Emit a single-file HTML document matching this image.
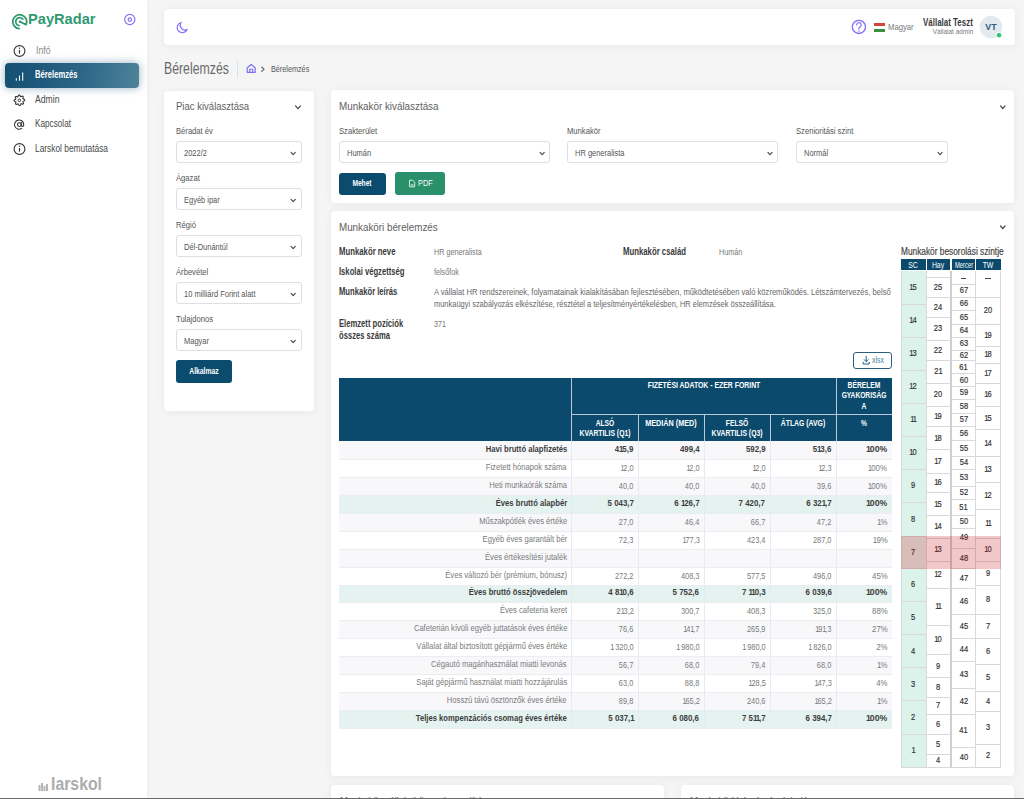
<!DOCTYPE html><html><head><meta charset="utf-8"><title>PayRadar</title><style>
*{margin:0;padding:0;box-sizing:border-box}
html,body{width:1024px;height:799px;overflow:hidden;background:#f5f5f5;font-family:"Liberation Sans",sans-serif}
.t{position:absolute;white-space:nowrap;line-height:1}
.b{position:absolute}
.card{position:absolute;background:#fff;border-radius:4px;box-shadow:0 1px 8px rgba(0,0,0,.06)}
.sel{position:absolute;background:#fff;border:1px solid #dedee6;border-radius:3px}
svg{position:absolute;overflow:visible}
</style></head><body>
<div class="b" style="left:0.00px;top:0.00px;width:147.00px;height:799.00px;background:#fff;box-shadow:1px 0 5px rgba(0,0,0,.03)"></div>
<svg style="left:8px;top:10px" width="25" height="25" viewBox="8 10 25 25"><path d="M19.09 28.67A7.0 7.0 0 1 1 26.04 24.66 L20 21.7" fill="none" stroke="#2f9a70" stroke-width="1.75" stroke-linecap="round" stroke-linejoin="round"/><path d="M19.01 25.64A4.0 4.0 0 1 1 22.76 19.13" fill="none" stroke="#2f9a70" stroke-width="1.75" stroke-linecap="round"/><circle cx="20" cy="21.7" r="1.3" fill="#2f9a70"/></svg>
<div class="t" style="left:27.80px;top:12.47px;font-size:14.8px;font-weight:700;color:#2f9a70;transform:scaleX(0.9886);transform-origin:0 0;">PayRadar</div>
<svg style="left:120px;top:10px" width="20" height="20" viewBox="120 10 20 20"><circle cx="129.8" cy="19.5" r="5.1" fill="none" stroke="#8072f5" stroke-width="1.15"/><circle cx="129.8" cy="19.5" r="1.7" fill="none" stroke="#8072f5" stroke-width="1.15"/></svg>
<div class="b" style="left:5.00px;top:62.50px;width:133.50px;height:25.50px;background:linear-gradient(100deg,#134f72 0%,#2b6586 55%,#4e8399 100%);border-radius:4px;box-shadow:0 0 8px rgba(20,80,115,.45)"></div>
<svg style="left:10px;top:40px" width="20" height="20" viewBox="10 40 20 20"><circle cx="19.5" cy="51" r="5.4" fill="none" stroke="#333" stroke-width="1.1"/><path d="M19.5 50v3.6" stroke="#333" stroke-width="1.2"/><circle cx="19.5" cy="48.3" r=".7" fill="#333"/></svg>
<svg style="left:10px;top:66px" width="20" height="20" viewBox="10 66 20 20"><path d="M16.3 80.3v-1.8M19.5 80.3v-4.3M22.7 80.3v-7.5" stroke="#fff" stroke-width="1.05" stroke-linecap="round"/></svg>
<svg style="left:10px;top:90px" width="20" height="20" viewBox="10 90 20 20"><path d="M24.69 100.30 L24.45 100.63 L24.06 100.91 L23.63 101.14 L23.27 101.34 L23.05 101.54 L23.01 101.80 L23.12 102.13 L23.30 102.55 L23.46 103.02 L23.52 103.46 L23.42 103.82 L23.14 104.04 L22.73 104.10 L22.26 104.03 L21.80 103.89 L21.40 103.77 L21.11 103.76 L20.90 103.91 L20.73 104.22 L20.57 104.65 L20.35 105.09 L20.08 105.45 L19.75 105.63 L19.40 105.59 L19.07 105.35 L18.79 104.96 L18.56 104.53 L18.36 104.17 L18.16 103.95 L17.90 103.91 L17.57 104.02 L17.15 104.20 L16.68 104.36 L16.24 104.42 L15.88 104.32 L15.66 104.04 L15.60 103.63 L15.67 103.16 L15.81 102.70 L15.93 102.30 L15.94 102.01 L15.79 101.80 L15.48 101.63 L15.05 101.47 L14.61 101.25 L14.25 100.98 L14.07 100.65 L14.11 100.30 L14.35 99.97 L14.74 99.69 L15.17 99.46 L15.53 99.26 L15.75 99.06 L15.79 98.80 L15.68 98.47 L15.50 98.05 L15.34 97.58 L15.28 97.14 L15.38 96.78 L15.66 96.56 L16.07 96.50 L16.54 96.57 L17.00 96.71 L17.40 96.83 L17.69 96.84 L17.90 96.69 L18.07 96.38 L18.23 95.95 L18.45 95.51 L18.72 95.15 L19.05 94.97 L19.40 95.01 L19.73 95.25 L20.01 95.64 L20.24 96.07 L20.44 96.43 L20.64 96.65 L20.90 96.69 L21.23 96.58 L21.65 96.40 L22.12 96.24 L22.56 96.18 L22.92 96.28 L23.14 96.56 L23.20 96.97 L23.13 97.44 L22.99 97.90 L22.87 98.30 L22.86 98.59 L23.01 98.80 L23.32 98.97 L23.75 99.13 L24.19 99.35 L24.55 99.62 L24.73 99.95Z" fill="none" stroke="#333" stroke-width="1.1"/><circle cx="19.4" cy="100.3" r="1.3" fill="none" stroke="#333" stroke-width="1"/></svg>
<svg style="left:10px;top:114px" width="20" height="20" viewBox="10 114 20 20"><circle cx="19.4" cy="124.6" r="1.9" fill="none" stroke="#333" stroke-width="1.1"/><path d="M21.3 122.6v2.6a1.2 1.2 0 0 0 2.4 0v-.6a4.6 4.6 0 1 0-2 3.8" fill="none" stroke="#333" stroke-width="1.1" stroke-linecap="round"/></svg>
<svg style="left:10px;top:139px" width="20" height="20" viewBox="10 139 20 20"><circle cx="19.5" cy="149" r="5.4" fill="none" stroke="#333" stroke-width="1.1"/><path d="M19.5 148v3.6" stroke="#333" stroke-width="1.2"/><circle cx="19.5" cy="146.3" r=".7" fill="#333"/></svg>
<div class="t" style="left:35.90px;top:46.45px;font-size:10.1px;font-weight:400;color:#888;transform:scaleX(0.8608);transform-origin:0 0;">Infó</div>
<div class="t" style="left:34.50px;top:70.25px;font-size:10.1px;font-weight:700;color:#fff;transform:scaleX(0.7588);transform-origin:0 0;">Bérelemzés</div>
<div class="t" style="left:34.50px;top:95.05px;font-size:10.1px;font-weight:400;color:#4a4a4a;transform:scaleX(0.8558);transform-origin:0 0;">Admin</div>
<div class="t" style="left:34.50px;top:119.45px;font-size:10.1px;font-weight:400;color:#4a4a4a;transform:scaleX(0.8117);transform-origin:0 0;">Kapcsolat</div>
<div class="t" style="left:34.50px;top:144.45px;font-size:10.1px;font-weight:400;color:#4a4a4a;transform:scaleX(0.8283);transform-origin:0 0;">Larskol bemutatása</div>
<svg style="left:30px;top:775px" width="25" height="20" viewBox="30 775 25 20"><path d="M38.5 791v-6h2v6zM41 791v-8h2v8zM43.5 791v-5h2v5zM46 791v-7h2v7z" fill="#b5b5b5"/></svg>
<div class="t" style="left:51.00px;top:775.32px;font-size:18.4px;font-weight:700;color:#acacac;transform:scaleX(0.8597);transform-origin:0 0;">larskol</div>
<div class="card" style="left:163.5px;top:9px;width:851px;height:35.5px"></div>
<svg style="left:172px;top:17px" width="20" height="20" viewBox="172 17 20 20"><path d="M187.2 29.6a4.9 4.9 0 0 1-6.1-7.1a5.2 5.2 0 1 0 6.1 7.1z" fill="none" stroke="#7d6ef5" stroke-width="1.2" stroke-linejoin="round"/></svg>
<svg style="left:848px;top:16px" width="22" height="22" viewBox="848 16 22 22"><circle cx="858.9" cy="26.9" r="6.6" fill="none" stroke="#7d6ef5" stroke-width="1.3"/><path d="M856.6 25a2.3 2.3 0 1 1 3.3 2.1c-.7.4-1 .8-1 1.5v.3" fill="none" stroke="#7d6ef5" stroke-width="1.2" stroke-linecap="round"/><circle cx="858.9" cy="31" r=".7" fill="#7d6ef5"/></svg>
<div class="b" style="left:874.00px;top:23.00px;width:11.00px;height:2.90px;background:#d6433a"></div>
<div class="b" style="left:874.00px;top:25.90px;width:11.00px;height:2.80px;background:#fff"></div>
<div class="b" style="left:874.00px;top:28.70px;width:11.00px;height:2.90px;background:#3a8f3e"></div>
<div class="t" style="left:888.00px;top:22.51px;font-size:9.2px;font-weight:400;color:#7a7a7a;transform:scaleX(0.8378);transform-origin:0 0;">Magyar</div>
<div class="t" style="right:51.00px;top:18.27px;font-size:10.2px;font-weight:700;color:#3a3a3a;transform:scaleX(0.7798);transform-origin:100% 0;">Vállalat Teszt</div>
<div class="t" style="right:51.00px;top:27.83px;font-size:8px;font-weight:400;color:#7a7a7a;transform:scaleX(0.8060);transform-origin:100% 0;">Vállalat admin</div>
<svg style="left:975px;top:12px" width="32" height="32" viewBox="975 12 32 32"><circle cx="991" cy="27" r="11.2" fill="#e4e9ee"/><circle cx="999" cy="35.2" r="2.8" fill="#28c76f" stroke="#fff" stroke-width="1"/></svg>
<div class="t" style="left:841.00px;width:300px;text-align:center;top:22.47px;font-size:9.6px;font-weight:700;color:#2b5f80;transform:scaleX(0.9200);transform-origin:50% 0;">VT</div>
<div class="t" style="left:163.90px;top:60.99px;font-size:15.6px;font-weight:400;color:#6a6a6a;transform:scaleX(0.7880);transform-origin:0 0;">Bérelemzés</div>
<div class="b" style="left:237.20px;top:61.25px;width:1.00px;height:16.45px;background:#dde1e6"></div>
<svg style="left:240px;top:58px" width="20" height="20" viewBox="240 58 20 20"><path d="M247.2 72.3v-4.6l4-3.2 4 3.2v4.6z" fill="none" stroke="#7d6ef5" stroke-width="1.2" stroke-linejoin="round"/><path d="M249.7 72.3v-3h3v3" fill="none" stroke="#7d6ef5" stroke-width="1.1"/></svg>
<svg style="left:255px;top:60px" width="15" height="15" viewBox="255 60 15 15"><path d="M261.8 67.2l2.2 2.1-2.2 2.1" fill="none" stroke="#555" stroke-width="1.1" stroke-linecap="round"/></svg>
<div class="t" style="left:270.60px;top:64.92px;font-size:8.6px;font-weight:400;color:#555;transform:scaleX(0.8435);transform-origin:0 0;">Bérelemzés</div>
<div class="card" style="left:163.5px;top:90.5px;width:150.5px;height:320.5px"></div>
<div class="card" style="left:330.5px;top:90px;width:683.5px;height:112.5px"></div>
<div class="card" style="left:330.5px;top:211px;width:683.5px;height:565px"></div>
<div class="card" style="left:330.5px;top:785px;width:333px;height:40px"></div>
<div class="card" style="left:681px;top:785px;width:333px;height:40px"></div>
<div class="t" style="left:176.00px;top:101.02px;font-size:11.2px;font-weight:400;color:#5e5e5e;transform:scaleX(0.8521);transform-origin:0 0;">Piac kiválasztása</div>
<svg style="left:292px;top:101px" width="12" height="12" viewBox="292 101 12 12"><path d="M295.50 105.90 L298.00 108.70 L300.50 105.90" fill="none" stroke="#444" stroke-width="1.2" stroke-linecap="round" stroke-linejoin="round"/></svg>
<div class="t" style="left:176.00px;top:126.97px;font-size:8.3px;font-weight:400;color:#555;transform:scaleX(0.9200);transform-origin:0 0;">Béradat év</div>
<div class="sel" style="left:176.4px;top:141.30px;width:125.3px;height:22px"></div>
<div class="t" style="left:184.30px;top:149.00px;font-size:8.5px;font-weight:400;color:#555;transform:scaleX(0.8800);transform-origin:0 0;">2022/2</div>
<svg style="left:287px;top:147px" width="12" height="12" viewBox="287 147 12 12"><path d="M291.10 152.35 L293.20 154.65 L295.30 152.35" fill="none" stroke="#444" stroke-width="1.1" stroke-linecap="round" stroke-linejoin="round"/></svg>
<div class="t" style="left:176.00px;top:173.97px;font-size:8.3px;font-weight:400;color:#555;transform:scaleX(0.9200);transform-origin:0 0;">Ágazat</div>
<div class="sel" style="left:176.4px;top:188.30px;width:125.3px;height:22px"></div>
<div class="t" style="left:184.30px;top:196.00px;font-size:8.5px;font-weight:400;color:#555;transform:scaleX(0.8800);transform-origin:0 0;">Egyéb ipar</div>
<svg style="left:287px;top:194px" width="12" height="12" viewBox="287 194 12 12"><path d="M291.10 199.35 L293.20 201.65 L295.30 199.35" fill="none" stroke="#444" stroke-width="1.1" stroke-linecap="round" stroke-linejoin="round"/></svg>
<div class="t" style="left:176.00px;top:220.97px;font-size:8.3px;font-weight:400;color:#555;transform:scaleX(0.9200);transform-origin:0 0;">Régió</div>
<div class="sel" style="left:176.4px;top:235.30px;width:125.3px;height:22px"></div>
<div class="t" style="left:184.30px;top:243.00px;font-size:8.5px;font-weight:400;color:#555;transform:scaleX(0.8800);transform-origin:0 0;">Dél-Dunántúl</div>
<svg style="left:287px;top:241px" width="12" height="12" viewBox="287 241 12 12"><path d="M291.10 246.35 L293.20 248.65 L295.30 246.35" fill="none" stroke="#444" stroke-width="1.1" stroke-linecap="round" stroke-linejoin="round"/></svg>
<div class="t" style="left:176.00px;top:267.97px;font-size:8.3px;font-weight:400;color:#555;transform:scaleX(0.9200);transform-origin:0 0;">Árbevétel</div>
<div class="sel" style="left:176.4px;top:282.30px;width:125.3px;height:22px"></div>
<div class="t" style="left:184.30px;top:290.00px;font-size:8.5px;font-weight:400;color:#555;transform:scaleX(0.8800);transform-origin:0 0;">10 milliárd Forint alatt</div>
<svg style="left:287px;top:288px" width="12" height="12" viewBox="287 288 12 12"><path d="M291.10 293.35 L293.20 295.65 L295.30 293.35" fill="none" stroke="#444" stroke-width="1.1" stroke-linecap="round" stroke-linejoin="round"/></svg>
<div class="t" style="left:176.00px;top:314.97px;font-size:8.3px;font-weight:400;color:#555;transform:scaleX(0.9200);transform-origin:0 0;">Tulajdonos</div>
<div class="sel" style="left:176.4px;top:329.30px;width:125.3px;height:22px"></div>
<div class="t" style="left:184.30px;top:337.00px;font-size:8.5px;font-weight:400;color:#555;transform:scaleX(0.8800);transform-origin:0 0;">Magyar</div>
<svg style="left:287px;top:335px" width="12" height="12" viewBox="287 335 12 12"><path d="M291.10 340.35 L293.20 342.65 L295.30 340.35" fill="none" stroke="#444" stroke-width="1.1" stroke-linecap="round" stroke-linejoin="round"/></svg>
<div class="b" style="left:175.50px;top:360.00px;width:56.50px;height:23.00px;background:#0b4b6e;border-radius:3px"></div>
<div class="t" style="left:53.75px;width:300px;text-align:center;top:367.17px;font-size:8.3px;font-weight:700;color:#fff;transform:scaleX(0.8200);transform-origin:50% 0;">Alkalmaz</div>
<div class="t" style="left:339.00px;top:101.02px;font-size:11.2px;font-weight:400;color:#5e5e5e;transform:scaleX(0.8792);transform-origin:0 0;">Munkakör kiválasztása</div>
<svg style="left:996px;top:101px" width="12" height="12" viewBox="996 101 12 12"><path d="M1000.60 105.90 L1002.80 108.70 L1005.00 105.90" fill="none" stroke="#444" stroke-width="1.2" stroke-linecap="round" stroke-linejoin="round"/></svg>
<div class="t" style="left:338.70px;top:126.97px;font-size:8.3px;font-weight:400;color:#555;transform:scaleX(0.9200);transform-origin:0 0;">Szakterület</div>
<div class="sel" style="left:338.7px;top:141.4px;width:211.80px;height:22px"></div>
<div class="t" style="left:347.20px;top:149.00px;font-size:8.5px;font-weight:400;color:#555;transform:scaleX(0.8800);transform-origin:0 0;">Humán</div>
<svg style="left:536px;top:147px" width="12" height="12" viewBox="536 147 12 12"><path d="M540.10 152.35 L542.20 154.65 L544.30 152.35" fill="none" stroke="#444" stroke-width="1.1" stroke-linecap="round" stroke-linejoin="round"/></svg>
<div class="t" style="left:566.60px;top:126.97px;font-size:8.3px;font-weight:400;color:#555;transform:scaleX(0.9200);transform-origin:0 0;">Munkakör</div>
<div class="sel" style="left:566.6px;top:141.4px;width:211.70px;height:22px"></div>
<div class="t" style="left:575.10px;top:149.00px;font-size:8.5px;font-weight:400;color:#555;transform:scaleX(0.8800);transform-origin:0 0;">HR generalista</div>
<svg style="left:764px;top:147px" width="12" height="12" viewBox="764 147 12 12"><path d="M767.90 152.35 L770.00 154.65 L772.10 152.35" fill="none" stroke="#444" stroke-width="1.1" stroke-linecap="round" stroke-linejoin="round"/></svg>
<div class="t" style="left:795.50px;top:126.97px;font-size:8.3px;font-weight:400;color:#555;transform:scaleX(0.9200);transform-origin:0 0;">Szenioritási szint</div>
<div class="sel" style="left:795.5px;top:141.4px;width:152.90px;height:22px"></div>
<div class="t" style="left:804.00px;top:149.00px;font-size:8.5px;font-weight:400;color:#555;transform:scaleX(0.8800);transform-origin:0 0;">Normál</div>
<svg style="left:934px;top:147px" width="12" height="12" viewBox="934 147 12 12"><path d="M938.00 152.35 L940.10 154.65 L942.20 152.35" fill="none" stroke="#444" stroke-width="1.1" stroke-linecap="round" stroke-linejoin="round"/></svg>
<div class="b" style="left:338.70px;top:172.50px;width:47.30px;height:22.20px;background:#0b4b6e;border-radius:3px"></div>
<div class="t" style="left:212.30px;width:300px;text-align:center;top:179.17px;font-size:8.3px;font-weight:700;color:#fff;transform:scaleX(0.8000);transform-origin:50% 0;font-weight:600">Mehet</div>
<div class="b" style="left:395.00px;top:172.20px;width:49.60px;height:22.50px;background:#2a8f6b;border-radius:3px"></div>
<svg style="left:405px;top:176px" width="14" height="14" viewBox="405 176 14 14"><path d="M409.5 180.2h3.2l2 2v4.6h-5.2z" fill="none" stroke="#e8f5ef" stroke-width=".9" stroke-linejoin="round"/><path d="M410.8 184.5h2.6M410.8 185.7h2.6" stroke="#e8f5ef" stroke-width=".6"/></svg>
<div class="t" style="left:417.60px;top:178.97px;font-size:8.3px;font-weight:400;color:#fff;transform:scaleX(0.8855);transform-origin:0 0;">PDF</div>
<svg style="left:996px;top:221px" width="12" height="12" viewBox="996 221 12 12"><path d="M1000.60 226.00 L1002.80 228.60 L1005.00 226.00" fill="none" stroke="#444" stroke-width="1.2" stroke-linecap="round" stroke-linejoin="round"/></svg>
<div class="t" style="left:338.75px;top:222.02px;font-size:11.2px;font-weight:400;color:#5e5e5e;transform:scaleX(0.8765);transform-origin:0 0;">Munkaköri bérelemzés</div>
<div class="t" style="left:338.75px;top:245.91px;font-size:10.5px;font-weight:700;color:#3a3a3a;transform:scaleX(0.7392);transform-origin:0 0;">Munkakör neve</div>
<div class="t" style="left:433.60px;top:248.02px;font-size:8.6px;font-weight:400;color:#777;transform:scaleX(0.8400);transform-origin:0 0;">HR generalista</div>
<div class="t" style="left:623.40px;top:246.31px;font-size:10.5px;font-weight:700;color:#3a3a3a;transform:scaleX(0.7395);transform-origin:0 0;">Munkakör család</div>
<div class="t" style="left:718.70px;top:248.42px;font-size:8.6px;font-weight:400;color:#777;transform:scaleX(0.8400);transform-origin:0 0;">Humán</div>
<div class="t" style="left:338.75px;top:266.31px;font-size:10.5px;font-weight:700;color:#3a3a3a;transform:scaleX(0.7280);transform-origin:0 0;">Iskolai végzettség</div>
<div class="t" style="left:433.60px;top:268.42px;font-size:8.6px;font-weight:400;color:#777;transform:scaleX(0.8400);transform-origin:0 0;">felsőfok</div>
<div class="t" style="left:338.75px;top:285.91px;font-size:10.5px;font-weight:700;color:#3a3a3a;transform:scaleX(0.7280);transform-origin:0 0;">Munkakör leírás</div>
<div class="t" style="left:433.60px;top:288.12px;font-size:8.6px;font-weight:400;color:#666;transform:scaleX(0.8820);transform-origin:0 0;">A vállalat HR rendszereinek, folyamatainak kialakításában fejlesztésében, működtetésében való közreműködés. Létszámtervezés, belső</div>
<div class="t" style="left:433.60px;top:300.02px;font-size:8.6px;font-weight:400;color:#666;transform:scaleX(0.8683);transform-origin:0 0;">munkaügyi szabályozás elkészítése, résztétel a teljesítményértékelésben, HR elemzések összeállítása.</div>
<div class="t" style="left:338.75px;top:318.01px;font-size:10.5px;font-weight:700;color:#3a3a3a;transform:scaleX(0.7280);transform-origin:0 0;">Elemzett pozíciók</div>
<div class="t" style="left:338.75px;top:330.31px;font-size:10.5px;font-weight:700;color:#3a3a3a;transform:scaleX(0.7280);transform-origin:0 0;">összes száma</div>
<div class="t" style="left:433.60px;top:320.22px;font-size:8.6px;font-weight:400;color:#777;transform:scaleX(0.8400);transform-origin:0 0;">371</div>
<div class="b" style="left:853.4px;top:352.1px;width:39px;height:16.7px;border:1px solid #2b5f80;border-radius:3px"></div>
<svg style="left:860px;top:352px" width="14" height="14" viewBox="860 352 14 14"><path d="M866.2 356.3v5.2M864.2 359.6l2 2 2-2M863.2 362.2v1.8h6v-1.8" fill="none" stroke="#2b5f80" stroke-width="1" stroke-linecap="round" stroke-linejoin="round"/></svg>
<div class="t" style="left:871.50px;top:357.46px;font-size:8.2px;font-weight:400;color:#4f7f9c;transform:scaleX(0.8600);transform-origin:0 0;">xlsx</div>
<div class="b" style="left:339.00px;top:377.60px;width:553.20px;height:63.40px;background:#0b4a6d"></div>
<div class="b" style="left:570.80px;top:377.60px;width:1.00px;height:63.00px;background:#b9cad6"></div>
<div class="b" style="left:835.90px;top:377.60px;width:1.00px;height:63.00px;background:#b9cad6"></div>
<div class="b" style="left:571.30px;top:414.00px;width:320.90px;height:1.00px;background:#b9cad6"></div>
<div class="b" style="left:637.90px;top:414.50px;width:1.00px;height:26.10px;background:#b9cad6"></div>
<div class="b" style="left:703.80px;top:414.50px;width:1.00px;height:26.10px;background:#b9cad6"></div>
<div class="b" style="left:769.80px;top:414.50px;width:1.00px;height:26.10px;background:#b9cad6"></div>
<div class="t" style="left:553.85px;width:300px;text-align:center;top:380.90px;font-size:8.5px;font-weight:700;color:#fff;transform:scaleX(0.8092);transform-origin:50% 0;">FIZETÉSI ADATOK - EZER FORINT</div>
<div class="t" style="left:714.30px;width:300px;text-align:center;top:380.80px;font-size:8.5px;font-weight:700;color:#fff;transform:scaleX(0.7900);transform-origin:50% 0;">BÉRELEM</div>
<div class="t" style="left:714.30px;width:300px;text-align:center;top:391.30px;font-size:8.5px;font-weight:700;color:#fff;transform:scaleX(0.7800);transform-origin:50% 0;">GYAKORISÁG</div>
<div class="t" style="left:714.30px;width:300px;text-align:center;top:401.60px;font-size:8.5px;font-weight:700;color:#fff;transform:scaleX(0.7900);transform-origin:50% 0;">A</div>
<div class="t" style="left:454.85px;width:300px;text-align:center;top:418.70px;font-size:8.5px;font-weight:700;color:#fff;transform:scaleX(0.7900);transform-origin:50% 0;">ALSÓ</div>
<div class="t" style="left:454.85px;width:300px;text-align:center;top:429.20px;font-size:8.5px;font-weight:700;color:#fff;transform:scaleX(0.8020);transform-origin:50% 0;">KVARTILIS (Q1)</div>
<div class="t" style="left:521.35px;width:300px;text-align:center;top:418.70px;font-size:8.5px;font-weight:700;color:#fff;transform:scaleX(0.8521);transform-origin:50% 0;">MEDIÁN (MED)</div>
<div class="t" style="left:587.30px;width:300px;text-align:center;top:418.70px;font-size:8.5px;font-weight:700;color:#fff;transform:scaleX(0.7900);transform-origin:50% 0;">FELSŐ</div>
<div class="t" style="left:587.30px;width:300px;text-align:center;top:429.20px;font-size:8.5px;font-weight:700;color:#fff;transform:scaleX(0.8020);transform-origin:50% 0;">KVARTILIS (Q3)</div>
<div class="t" style="left:653.35px;width:300px;text-align:center;top:418.70px;font-size:8.5px;font-weight:700;color:#fff;transform:scaleX(0.8061);transform-origin:50% 0;">ÁTLAG (AVG)</div>
<div class="t" style="left:714.30px;width:300px;text-align:center;top:418.70px;font-size:8.5px;font-weight:700;color:#fff;transform:scaleX(0.7900);transform-origin:50% 0;">%</div>
<div class="b" style="left:339.00px;top:441.00px;width:553.20px;height:19.00px;background:#f8f8fb"></div>
<div class="b" style="left:339.00px;top:459.00px;width:553.20px;height:1.00px;background:#ececf2"></div>
<div class="b" style="left:570.80px;top:441.00px;width:1.00px;height:18.00px;background:#e9e9f0"></div>
<div class="b" style="left:637.90px;top:441.00px;width:1.00px;height:18.00px;background:#e9e9f0"></div>
<div class="b" style="left:703.80px;top:441.00px;width:1.00px;height:18.00px;background:#e9e9f0"></div>
<div class="b" style="left:769.80px;top:441.00px;width:1.00px;height:18.00px;background:#e9e9f0"></div>
<div class="b" style="left:835.90px;top:441.00px;width:1.00px;height:18.00px;background:#e9e9f0"></div>
<div class="t" style="right:457.10px;top:444.42px;font-size:9.9px;font-weight:700;color:#3c3c3c;transform:scaleX(0.7750);transform-origin:100% 0;">Havi bruttó alapfizetés</div>
<div class="t" style="right:390.50px;top:444.42px;font-size:9.9px;font-weight:700;color:#404040;transform:scaleX(0.8000);transform-origin:100% 0;">4<span style="letter-spacing:-1.4px">1</span>5,9</div>
<div class="t" style="right:324.60px;top:444.42px;font-size:9.9px;font-weight:700;color:#404040;transform:scaleX(0.8000);transform-origin:100% 0;">499,4</div>
<div class="t" style="right:258.60px;top:444.42px;font-size:9.9px;font-weight:700;color:#404040;transform:scaleX(0.8000);transform-origin:100% 0;">592,9</div>
<div class="t" style="right:192.50px;top:444.42px;font-size:9.9px;font-weight:700;color:#404040;transform:scaleX(0.8000);transform-origin:100% 0;">5<span style="letter-spacing:-1.4px">1</span>3,6</div>
<div class="t" style="right:136.70px;top:444.42px;font-size:9.9px;font-weight:700;color:#404040;transform:scaleX(0.8800);transform-origin:100% 0;"><span style="letter-spacing:-1.0px">1</span>00%</div>
<div class="b" style="left:339.00px;top:460.00px;width:553.20px;height:18.00px;background:#fff"></div>
<div class="b" style="left:339.00px;top:477.00px;width:553.20px;height:1.00px;background:#ececf2"></div>
<div class="b" style="left:570.80px;top:460.00px;width:1.00px;height:17.00px;background:#e9e9f0"></div>
<div class="b" style="left:637.90px;top:460.00px;width:1.00px;height:17.00px;background:#e9e9f0"></div>
<div class="b" style="left:703.80px;top:460.00px;width:1.00px;height:17.00px;background:#e9e9f0"></div>
<div class="b" style="left:769.80px;top:460.00px;width:1.00px;height:17.00px;background:#e9e9f0"></div>
<div class="b" style="left:835.90px;top:460.00px;width:1.00px;height:17.00px;background:#e9e9f0"></div>
<div class="t" style="right:457.10px;top:463.01px;font-size:9.2px;font-weight:400;color:#7a7a7a;transform:scaleX(0.8280);transform-origin:100% 0;">Fizetett hónapok száma</div>
<div class="t" style="right:390.50px;top:462.84px;font-size:9.4px;font-weight:400;color:#7a7a7a;transform:scaleX(0.7900);transform-origin:100% 0;"><span style="letter-spacing:-1.6px">1</span>2,0</div>
<div class="t" style="right:324.60px;top:462.84px;font-size:9.4px;font-weight:400;color:#7a7a7a;transform:scaleX(0.7900);transform-origin:100% 0;"><span style="letter-spacing:-1.6px">1</span>2,0</div>
<div class="t" style="right:258.60px;top:462.84px;font-size:9.4px;font-weight:400;color:#7a7a7a;transform:scaleX(0.7900);transform-origin:100% 0;"><span style="letter-spacing:-1.6px">1</span>2,0</div>
<div class="t" style="right:192.50px;top:462.84px;font-size:9.4px;font-weight:400;color:#7a7a7a;transform:scaleX(0.7900);transform-origin:100% 0;"><span style="letter-spacing:-1.6px">1</span>2,3</div>
<div class="t" style="right:136.70px;top:462.84px;font-size:9.4px;font-weight:400;color:#7a7a7a;transform:scaleX(0.8400);transform-origin:100% 0;"><span style="letter-spacing:-1.0px">1</span>00%</div>
<div class="b" style="left:339.00px;top:478.00px;width:553.20px;height:18.00px;background:#f8f8fb"></div>
<div class="b" style="left:339.00px;top:495.00px;width:553.20px;height:1.00px;background:#ececf2"></div>
<div class="b" style="left:570.80px;top:478.00px;width:1.00px;height:17.00px;background:#e9e9f0"></div>
<div class="b" style="left:637.90px;top:478.00px;width:1.00px;height:17.00px;background:#e9e9f0"></div>
<div class="b" style="left:703.80px;top:478.00px;width:1.00px;height:17.00px;background:#e9e9f0"></div>
<div class="b" style="left:769.80px;top:478.00px;width:1.00px;height:17.00px;background:#e9e9f0"></div>
<div class="b" style="left:835.90px;top:478.00px;width:1.00px;height:17.00px;background:#e9e9f0"></div>
<div class="t" style="right:457.10px;top:481.01px;font-size:9.2px;font-weight:400;color:#7a7a7a;transform:scaleX(0.8280);transform-origin:100% 0;">Heti munkaórák száma</div>
<div class="t" style="right:390.50px;top:480.84px;font-size:9.4px;font-weight:400;color:#7a7a7a;transform:scaleX(0.7900);transform-origin:100% 0;">40,0</div>
<div class="t" style="right:324.60px;top:480.84px;font-size:9.4px;font-weight:400;color:#7a7a7a;transform:scaleX(0.7900);transform-origin:100% 0;">40,0</div>
<div class="t" style="right:258.60px;top:480.84px;font-size:9.4px;font-weight:400;color:#7a7a7a;transform:scaleX(0.7900);transform-origin:100% 0;">40,0</div>
<div class="t" style="right:192.50px;top:480.84px;font-size:9.4px;font-weight:400;color:#7a7a7a;transform:scaleX(0.7900);transform-origin:100% 0;">39,6</div>
<div class="t" style="right:136.70px;top:480.84px;font-size:9.4px;font-weight:400;color:#7a7a7a;transform:scaleX(0.8400);transform-origin:100% 0;"><span style="letter-spacing:-1.0px">1</span>00%</div>
<div class="b" style="left:339.00px;top:496.00px;width:553.20px;height:18.00px;background:#e5f3f0"></div>
<div class="b" style="left:339.00px;top:513.00px;width:553.20px;height:1.00px;background:#ececf2"></div>
<div class="b" style="left:570.80px;top:496.00px;width:1.00px;height:17.00px;background:#e9e9f0"></div>
<div class="b" style="left:637.90px;top:496.00px;width:1.00px;height:17.00px;background:#e9e9f0"></div>
<div class="b" style="left:703.80px;top:496.00px;width:1.00px;height:17.00px;background:#e9e9f0"></div>
<div class="b" style="left:769.80px;top:496.00px;width:1.00px;height:17.00px;background:#e9e9f0"></div>
<div class="b" style="left:835.90px;top:496.00px;width:1.00px;height:17.00px;background:#e9e9f0"></div>
<div class="t" style="right:457.10px;top:498.42px;font-size:9.9px;font-weight:700;color:#3c3c3c;transform:scaleX(0.7750);transform-origin:100% 0;">Éves bruttó alapbér</div>
<div class="t" style="right:390.50px;top:498.42px;font-size:9.9px;font-weight:700;color:#404040;transform:scaleX(0.8000);transform-origin:100% 0;">5 043,7</div>
<div class="t" style="right:324.60px;top:498.42px;font-size:9.9px;font-weight:700;color:#404040;transform:scaleX(0.8000);transform-origin:100% 0;">6 <span style="letter-spacing:-1.4px">1</span>26,7</div>
<div class="t" style="right:258.60px;top:498.42px;font-size:9.9px;font-weight:700;color:#404040;transform:scaleX(0.8000);transform-origin:100% 0;">7 420,7</div>
<div class="t" style="right:192.50px;top:498.42px;font-size:9.9px;font-weight:700;color:#404040;transform:scaleX(0.8000);transform-origin:100% 0;">6 32<span style="letter-spacing:-1.4px">1</span>,7</div>
<div class="t" style="right:136.70px;top:498.42px;font-size:9.9px;font-weight:700;color:#404040;transform:scaleX(0.8800);transform-origin:100% 0;"><span style="letter-spacing:-1.0px">1</span>00%</div>
<div class="b" style="left:339.00px;top:514.00px;width:553.20px;height:18.00px;background:#f8f8fb"></div>
<div class="b" style="left:339.00px;top:531.00px;width:553.20px;height:1.00px;background:#ececf2"></div>
<div class="b" style="left:570.80px;top:514.00px;width:1.00px;height:17.00px;background:#e9e9f0"></div>
<div class="b" style="left:637.90px;top:514.00px;width:1.00px;height:17.00px;background:#e9e9f0"></div>
<div class="b" style="left:703.80px;top:514.00px;width:1.00px;height:17.00px;background:#e9e9f0"></div>
<div class="b" style="left:769.80px;top:514.00px;width:1.00px;height:17.00px;background:#e9e9f0"></div>
<div class="b" style="left:835.90px;top:514.00px;width:1.00px;height:17.00px;background:#e9e9f0"></div>
<div class="t" style="right:457.10px;top:517.01px;font-size:9.2px;font-weight:400;color:#7a7a7a;transform:scaleX(0.8280);transform-origin:100% 0;">Műszakpótlék éves értéke</div>
<div class="t" style="right:390.50px;top:516.84px;font-size:9.4px;font-weight:400;color:#7a7a7a;transform:scaleX(0.7900);transform-origin:100% 0;">27,0</div>
<div class="t" style="right:324.60px;top:516.84px;font-size:9.4px;font-weight:400;color:#7a7a7a;transform:scaleX(0.7900);transform-origin:100% 0;">46,4</div>
<div class="t" style="right:258.60px;top:516.84px;font-size:9.4px;font-weight:400;color:#7a7a7a;transform:scaleX(0.7900);transform-origin:100% 0;">66,7</div>
<div class="t" style="right:192.50px;top:516.84px;font-size:9.4px;font-weight:400;color:#7a7a7a;transform:scaleX(0.7900);transform-origin:100% 0;">47,2</div>
<div class="t" style="right:136.70px;top:516.84px;font-size:9.4px;font-weight:400;color:#7a7a7a;transform:scaleX(0.8400);transform-origin:100% 0;"><span style="letter-spacing:-1.0px">1</span>%</div>
<div class="b" style="left:339.00px;top:532.00px;width:553.20px;height:18.00px;background:#fff"></div>
<div class="b" style="left:339.00px;top:549.00px;width:553.20px;height:1.00px;background:#ececf2"></div>
<div class="b" style="left:570.80px;top:532.00px;width:1.00px;height:17.00px;background:#e9e9f0"></div>
<div class="b" style="left:637.90px;top:532.00px;width:1.00px;height:17.00px;background:#e9e9f0"></div>
<div class="b" style="left:703.80px;top:532.00px;width:1.00px;height:17.00px;background:#e9e9f0"></div>
<div class="b" style="left:769.80px;top:532.00px;width:1.00px;height:17.00px;background:#e9e9f0"></div>
<div class="b" style="left:835.90px;top:532.00px;width:1.00px;height:17.00px;background:#e9e9f0"></div>
<div class="t" style="right:457.10px;top:535.01px;font-size:9.2px;font-weight:400;color:#7a7a7a;transform:scaleX(0.8280);transform-origin:100% 0;">Egyéb éves garantált bér</div>
<div class="t" style="right:390.50px;top:534.84px;font-size:9.4px;font-weight:400;color:#7a7a7a;transform:scaleX(0.7900);transform-origin:100% 0;">72,3</div>
<div class="t" style="right:324.60px;top:534.84px;font-size:9.4px;font-weight:400;color:#7a7a7a;transform:scaleX(0.7900);transform-origin:100% 0;"><span style="letter-spacing:-1.6px">1</span>77,3</div>
<div class="t" style="right:258.60px;top:534.84px;font-size:9.4px;font-weight:400;color:#7a7a7a;transform:scaleX(0.7900);transform-origin:100% 0;">423,4</div>
<div class="t" style="right:192.50px;top:534.84px;font-size:9.4px;font-weight:400;color:#7a7a7a;transform:scaleX(0.7900);transform-origin:100% 0;">287,0</div>
<div class="t" style="right:136.70px;top:534.84px;font-size:9.4px;font-weight:400;color:#7a7a7a;transform:scaleX(0.8400);transform-origin:100% 0;"><span style="letter-spacing:-1.0px">1</span>9%</div>
<div class="b" style="left:339.00px;top:550.00px;width:553.20px;height:18.00px;background:#f8f8fb"></div>
<div class="b" style="left:339.00px;top:567.00px;width:553.20px;height:1.00px;background:#ececf2"></div>
<div class="b" style="left:570.80px;top:550.00px;width:1.00px;height:17.00px;background:#e9e9f0"></div>
<div class="b" style="left:637.90px;top:550.00px;width:1.00px;height:17.00px;background:#e9e9f0"></div>
<div class="b" style="left:703.80px;top:550.00px;width:1.00px;height:17.00px;background:#e9e9f0"></div>
<div class="b" style="left:769.80px;top:550.00px;width:1.00px;height:17.00px;background:#e9e9f0"></div>
<div class="b" style="left:835.90px;top:550.00px;width:1.00px;height:17.00px;background:#e9e9f0"></div>
<div class="t" style="right:457.10px;top:553.01px;font-size:9.2px;font-weight:400;color:#7a7a7a;transform:scaleX(0.8280);transform-origin:100% 0;">Éves értékesítési jutalék</div>
<div class="b" style="left:339.00px;top:568.00px;width:553.20px;height:18.00px;background:#fff"></div>
<div class="b" style="left:339.00px;top:585.00px;width:553.20px;height:1.00px;background:#ececf2"></div>
<div class="b" style="left:570.80px;top:568.00px;width:1.00px;height:17.00px;background:#e9e9f0"></div>
<div class="b" style="left:637.90px;top:568.00px;width:1.00px;height:17.00px;background:#e9e9f0"></div>
<div class="b" style="left:703.80px;top:568.00px;width:1.00px;height:17.00px;background:#e9e9f0"></div>
<div class="b" style="left:769.80px;top:568.00px;width:1.00px;height:17.00px;background:#e9e9f0"></div>
<div class="b" style="left:835.90px;top:568.00px;width:1.00px;height:17.00px;background:#e9e9f0"></div>
<div class="t" style="right:457.10px;top:571.01px;font-size:9.2px;font-weight:400;color:#7a7a7a;transform:scaleX(0.8280);transform-origin:100% 0;">Éves változó bér (prémium, bónusz)</div>
<div class="t" style="right:390.50px;top:570.84px;font-size:9.4px;font-weight:400;color:#7a7a7a;transform:scaleX(0.7900);transform-origin:100% 0;">272,2</div>
<div class="t" style="right:324.60px;top:570.84px;font-size:9.4px;font-weight:400;color:#7a7a7a;transform:scaleX(0.7900);transform-origin:100% 0;">408,3</div>
<div class="t" style="right:258.60px;top:570.84px;font-size:9.4px;font-weight:400;color:#7a7a7a;transform:scaleX(0.7900);transform-origin:100% 0;">577,5</div>
<div class="t" style="right:192.50px;top:570.84px;font-size:9.4px;font-weight:400;color:#7a7a7a;transform:scaleX(0.7900);transform-origin:100% 0;">496,0</div>
<div class="t" style="right:136.70px;top:570.84px;font-size:9.4px;font-weight:400;color:#7a7a7a;transform:scaleX(0.8400);transform-origin:100% 0;">45%</div>
<div class="b" style="left:339.00px;top:586.00px;width:553.20px;height:17.00px;background:#e5f3f0"></div>
<div class="b" style="left:339.00px;top:602.00px;width:553.20px;height:1.00px;background:#ececf2"></div>
<div class="b" style="left:570.80px;top:586.00px;width:1.00px;height:16.00px;background:#e9e9f0"></div>
<div class="b" style="left:637.90px;top:586.00px;width:1.00px;height:16.00px;background:#e9e9f0"></div>
<div class="b" style="left:703.80px;top:586.00px;width:1.00px;height:16.00px;background:#e9e9f0"></div>
<div class="b" style="left:769.80px;top:586.00px;width:1.00px;height:16.00px;background:#e9e9f0"></div>
<div class="b" style="left:835.90px;top:586.00px;width:1.00px;height:16.00px;background:#e9e9f0"></div>
<div class="t" style="right:457.10px;top:587.42px;font-size:9.9px;font-weight:700;color:#3c3c3c;transform:scaleX(0.7750);transform-origin:100% 0;">Éves bruttó összjövedelem</div>
<div class="t" style="right:390.50px;top:587.42px;font-size:9.9px;font-weight:700;color:#404040;transform:scaleX(0.8000);transform-origin:100% 0;">4 8<span style="letter-spacing:-1.4px">1</span>0,6</div>
<div class="t" style="right:324.60px;top:587.42px;font-size:9.9px;font-weight:700;color:#404040;transform:scaleX(0.8000);transform-origin:100% 0;">5 752,6</div>
<div class="t" style="right:258.60px;top:587.42px;font-size:9.9px;font-weight:700;color:#404040;transform:scaleX(0.8000);transform-origin:100% 0;">7 <span style="letter-spacing:-1.4px">1</span><span style="letter-spacing:-1.4px">1</span>0,3</div>
<div class="t" style="right:192.50px;top:587.42px;font-size:9.9px;font-weight:700;color:#404040;transform:scaleX(0.8000);transform-origin:100% 0;">6 039,6</div>
<div class="t" style="right:136.70px;top:587.42px;font-size:9.9px;font-weight:700;color:#404040;transform:scaleX(0.8800);transform-origin:100% 0;"><span style="letter-spacing:-1.0px">1</span>00%</div>
<div class="b" style="left:339.00px;top:603.00px;width:553.20px;height:18.00px;background:#fff"></div>
<div class="b" style="left:339.00px;top:620.00px;width:553.20px;height:1.00px;background:#ececf2"></div>
<div class="b" style="left:570.80px;top:603.00px;width:1.00px;height:17.00px;background:#e9e9f0"></div>
<div class="b" style="left:637.90px;top:603.00px;width:1.00px;height:17.00px;background:#e9e9f0"></div>
<div class="b" style="left:703.80px;top:603.00px;width:1.00px;height:17.00px;background:#e9e9f0"></div>
<div class="b" style="left:769.80px;top:603.00px;width:1.00px;height:17.00px;background:#e9e9f0"></div>
<div class="b" style="left:835.90px;top:603.00px;width:1.00px;height:17.00px;background:#e9e9f0"></div>
<div class="t" style="right:457.10px;top:606.01px;font-size:9.2px;font-weight:400;color:#7a7a7a;transform:scaleX(0.8280);transform-origin:100% 0;">Éves cafeteria keret</div>
<div class="t" style="right:390.50px;top:605.84px;font-size:9.4px;font-weight:400;color:#7a7a7a;transform:scaleX(0.7900);transform-origin:100% 0;">2<span style="letter-spacing:-1.6px">1</span>3,2</div>
<div class="t" style="right:324.60px;top:605.84px;font-size:9.4px;font-weight:400;color:#7a7a7a;transform:scaleX(0.7900);transform-origin:100% 0;">300,7</div>
<div class="t" style="right:258.60px;top:605.84px;font-size:9.4px;font-weight:400;color:#7a7a7a;transform:scaleX(0.7900);transform-origin:100% 0;">408,3</div>
<div class="t" style="right:192.50px;top:605.84px;font-size:9.4px;font-weight:400;color:#7a7a7a;transform:scaleX(0.7900);transform-origin:100% 0;">325,0</div>
<div class="t" style="right:136.70px;top:605.84px;font-size:9.4px;font-weight:400;color:#7a7a7a;transform:scaleX(0.8400);transform-origin:100% 0;">88%</div>
<div class="b" style="left:339.00px;top:621.00px;width:553.20px;height:18.00px;background:#f8f8fb"></div>
<div class="b" style="left:339.00px;top:638.00px;width:553.20px;height:1.00px;background:#ececf2"></div>
<div class="b" style="left:570.80px;top:621.00px;width:1.00px;height:17.00px;background:#e9e9f0"></div>
<div class="b" style="left:637.90px;top:621.00px;width:1.00px;height:17.00px;background:#e9e9f0"></div>
<div class="b" style="left:703.80px;top:621.00px;width:1.00px;height:17.00px;background:#e9e9f0"></div>
<div class="b" style="left:769.80px;top:621.00px;width:1.00px;height:17.00px;background:#e9e9f0"></div>
<div class="b" style="left:835.90px;top:621.00px;width:1.00px;height:17.00px;background:#e9e9f0"></div>
<div class="t" style="right:457.10px;top:624.01px;font-size:9.2px;font-weight:400;color:#7a7a7a;transform:scaleX(0.8280);transform-origin:100% 0;">Cafeterián kívüli egyéb juttatások éves értéke</div>
<div class="t" style="right:390.50px;top:623.84px;font-size:9.4px;font-weight:400;color:#7a7a7a;transform:scaleX(0.7900);transform-origin:100% 0;">76,6</div>
<div class="t" style="right:324.60px;top:623.84px;font-size:9.4px;font-weight:400;color:#7a7a7a;transform:scaleX(0.7900);transform-origin:100% 0;"><span style="letter-spacing:-1.6px">1</span>4<span style="letter-spacing:-1.6px">1</span>,7</div>
<div class="t" style="right:258.60px;top:623.84px;font-size:9.4px;font-weight:400;color:#7a7a7a;transform:scaleX(0.7900);transform-origin:100% 0;">265,9</div>
<div class="t" style="right:192.50px;top:623.84px;font-size:9.4px;font-weight:400;color:#7a7a7a;transform:scaleX(0.7900);transform-origin:100% 0;"><span style="letter-spacing:-1.6px">1</span>9<span style="letter-spacing:-1.6px">1</span>,3</div>
<div class="t" style="right:136.70px;top:623.84px;font-size:9.4px;font-weight:400;color:#7a7a7a;transform:scaleX(0.8400);transform-origin:100% 0;">27%</div>
<div class="b" style="left:339.00px;top:639.00px;width:553.20px;height:18.00px;background:#fff"></div>
<div class="b" style="left:339.00px;top:656.00px;width:553.20px;height:1.00px;background:#ececf2"></div>
<div class="b" style="left:570.80px;top:639.00px;width:1.00px;height:17.00px;background:#e9e9f0"></div>
<div class="b" style="left:637.90px;top:639.00px;width:1.00px;height:17.00px;background:#e9e9f0"></div>
<div class="b" style="left:703.80px;top:639.00px;width:1.00px;height:17.00px;background:#e9e9f0"></div>
<div class="b" style="left:769.80px;top:639.00px;width:1.00px;height:17.00px;background:#e9e9f0"></div>
<div class="b" style="left:835.90px;top:639.00px;width:1.00px;height:17.00px;background:#e9e9f0"></div>
<div class="t" style="right:457.10px;top:642.01px;font-size:9.2px;font-weight:400;color:#7a7a7a;transform:scaleX(0.8280);transform-origin:100% 0;">Vállalat által biztosított gépjármű éves értéke</div>
<div class="t" style="right:390.50px;top:641.84px;font-size:9.4px;font-weight:400;color:#7a7a7a;transform:scaleX(0.7900);transform-origin:100% 0;"><span style="letter-spacing:-1.6px">1</span> 320,0</div>
<div class="t" style="right:324.60px;top:641.84px;font-size:9.4px;font-weight:400;color:#7a7a7a;transform:scaleX(0.7900);transform-origin:100% 0;"><span style="letter-spacing:-1.6px">1</span> 980,0</div>
<div class="t" style="right:258.60px;top:641.84px;font-size:9.4px;font-weight:400;color:#7a7a7a;transform:scaleX(0.7900);transform-origin:100% 0;"><span style="letter-spacing:-1.6px">1</span> 980,0</div>
<div class="t" style="right:192.50px;top:641.84px;font-size:9.4px;font-weight:400;color:#7a7a7a;transform:scaleX(0.7900);transform-origin:100% 0;"><span style="letter-spacing:-1.6px">1</span> 826,0</div>
<div class="t" style="right:136.70px;top:641.84px;font-size:9.4px;font-weight:400;color:#7a7a7a;transform:scaleX(0.8400);transform-origin:100% 0;">2%</div>
<div class="b" style="left:339.00px;top:657.00px;width:553.20px;height:18.00px;background:#f8f8fb"></div>
<div class="b" style="left:339.00px;top:674.00px;width:553.20px;height:1.00px;background:#ececf2"></div>
<div class="b" style="left:570.80px;top:657.00px;width:1.00px;height:17.00px;background:#e9e9f0"></div>
<div class="b" style="left:637.90px;top:657.00px;width:1.00px;height:17.00px;background:#e9e9f0"></div>
<div class="b" style="left:703.80px;top:657.00px;width:1.00px;height:17.00px;background:#e9e9f0"></div>
<div class="b" style="left:769.80px;top:657.00px;width:1.00px;height:17.00px;background:#e9e9f0"></div>
<div class="b" style="left:835.90px;top:657.00px;width:1.00px;height:17.00px;background:#e9e9f0"></div>
<div class="t" style="right:457.10px;top:660.01px;font-size:9.2px;font-weight:400;color:#7a7a7a;transform:scaleX(0.8280);transform-origin:100% 0;">Cégautó magánhasználat miatti levonás</div>
<div class="t" style="right:390.50px;top:659.84px;font-size:9.4px;font-weight:400;color:#7a7a7a;transform:scaleX(0.7900);transform-origin:100% 0;">56,7</div>
<div class="t" style="right:324.60px;top:659.84px;font-size:9.4px;font-weight:400;color:#7a7a7a;transform:scaleX(0.7900);transform-origin:100% 0;">68,0</div>
<div class="t" style="right:258.60px;top:659.84px;font-size:9.4px;font-weight:400;color:#7a7a7a;transform:scaleX(0.7900);transform-origin:100% 0;">79,4</div>
<div class="t" style="right:192.50px;top:659.84px;font-size:9.4px;font-weight:400;color:#7a7a7a;transform:scaleX(0.7900);transform-origin:100% 0;">68,0</div>
<div class="t" style="right:136.70px;top:659.84px;font-size:9.4px;font-weight:400;color:#7a7a7a;transform:scaleX(0.8400);transform-origin:100% 0;"><span style="letter-spacing:-1.0px">1</span>%</div>
<div class="b" style="left:339.00px;top:675.00px;width:553.20px;height:18.00px;background:#fff"></div>
<div class="b" style="left:339.00px;top:692.00px;width:553.20px;height:1.00px;background:#ececf2"></div>
<div class="b" style="left:570.80px;top:675.00px;width:1.00px;height:17.00px;background:#e9e9f0"></div>
<div class="b" style="left:637.90px;top:675.00px;width:1.00px;height:17.00px;background:#e9e9f0"></div>
<div class="b" style="left:703.80px;top:675.00px;width:1.00px;height:17.00px;background:#e9e9f0"></div>
<div class="b" style="left:769.80px;top:675.00px;width:1.00px;height:17.00px;background:#e9e9f0"></div>
<div class="b" style="left:835.90px;top:675.00px;width:1.00px;height:17.00px;background:#e9e9f0"></div>
<div class="t" style="right:457.10px;top:678.01px;font-size:9.2px;font-weight:400;color:#7a7a7a;transform:scaleX(0.8280);transform-origin:100% 0;">Saját gépjármű használat miatti hozzájárulás</div>
<div class="t" style="right:390.50px;top:677.84px;font-size:9.4px;font-weight:400;color:#7a7a7a;transform:scaleX(0.7900);transform-origin:100% 0;">63,0</div>
<div class="t" style="right:324.60px;top:677.84px;font-size:9.4px;font-weight:400;color:#7a7a7a;transform:scaleX(0.7900);transform-origin:100% 0;">88,8</div>
<div class="t" style="right:258.60px;top:677.84px;font-size:9.4px;font-weight:400;color:#7a7a7a;transform:scaleX(0.7900);transform-origin:100% 0;"><span style="letter-spacing:-1.6px">1</span>28,5</div>
<div class="t" style="right:192.50px;top:677.84px;font-size:9.4px;font-weight:400;color:#7a7a7a;transform:scaleX(0.7900);transform-origin:100% 0;"><span style="letter-spacing:-1.6px">1</span>47,3</div>
<div class="t" style="right:136.70px;top:677.84px;font-size:9.4px;font-weight:400;color:#7a7a7a;transform:scaleX(0.8400);transform-origin:100% 0;">4%</div>
<div class="b" style="left:339.00px;top:693.00px;width:553.20px;height:18.00px;background:#f8f8fb"></div>
<div class="b" style="left:339.00px;top:710.00px;width:553.20px;height:1.00px;background:#ececf2"></div>
<div class="b" style="left:570.80px;top:693.00px;width:1.00px;height:17.00px;background:#e9e9f0"></div>
<div class="b" style="left:637.90px;top:693.00px;width:1.00px;height:17.00px;background:#e9e9f0"></div>
<div class="b" style="left:703.80px;top:693.00px;width:1.00px;height:17.00px;background:#e9e9f0"></div>
<div class="b" style="left:769.80px;top:693.00px;width:1.00px;height:17.00px;background:#e9e9f0"></div>
<div class="b" style="left:835.90px;top:693.00px;width:1.00px;height:17.00px;background:#e9e9f0"></div>
<div class="t" style="right:457.10px;top:696.01px;font-size:9.2px;font-weight:400;color:#7a7a7a;transform:scaleX(0.8280);transform-origin:100% 0;">Hosszú távú ösztönzők éves értéke</div>
<div class="t" style="right:390.50px;top:695.84px;font-size:9.4px;font-weight:400;color:#7a7a7a;transform:scaleX(0.7900);transform-origin:100% 0;">89,8</div>
<div class="t" style="right:324.60px;top:695.84px;font-size:9.4px;font-weight:400;color:#7a7a7a;transform:scaleX(0.7900);transform-origin:100% 0;"><span style="letter-spacing:-1.6px">1</span>65,2</div>
<div class="t" style="right:258.60px;top:695.84px;font-size:9.4px;font-weight:400;color:#7a7a7a;transform:scaleX(0.7900);transform-origin:100% 0;">240,6</div>
<div class="t" style="right:192.50px;top:695.84px;font-size:9.4px;font-weight:400;color:#7a7a7a;transform:scaleX(0.7900);transform-origin:100% 0;"><span style="letter-spacing:-1.6px">1</span>65,2</div>
<div class="t" style="right:136.70px;top:695.84px;font-size:9.4px;font-weight:400;color:#7a7a7a;transform:scaleX(0.8400);transform-origin:100% 0;"><span style="letter-spacing:-1.0px">1</span>%</div>
<div class="b" style="left:339.00px;top:711.00px;width:553.20px;height:18.00px;background:#e5f3f0"></div>
<div class="b" style="left:339.00px;top:728.00px;width:553.20px;height:1.00px;background:#ececf2"></div>
<div class="b" style="left:570.80px;top:711.00px;width:1.00px;height:17.00px;background:#e9e9f0"></div>
<div class="b" style="left:637.90px;top:711.00px;width:1.00px;height:17.00px;background:#e9e9f0"></div>
<div class="b" style="left:703.80px;top:711.00px;width:1.00px;height:17.00px;background:#e9e9f0"></div>
<div class="b" style="left:769.80px;top:711.00px;width:1.00px;height:17.00px;background:#e9e9f0"></div>
<div class="b" style="left:835.90px;top:711.00px;width:1.00px;height:17.00px;background:#e9e9f0"></div>
<div class="t" style="right:457.10px;top:713.42px;font-size:9.9px;font-weight:700;color:#3c3c3c;transform:scaleX(0.7750);transform-origin:100% 0;">Teljes kompenzációs csomag éves értéke</div>
<div class="t" style="right:390.50px;top:713.42px;font-size:9.9px;font-weight:700;color:#404040;transform:scaleX(0.8000);transform-origin:100% 0;">5 037,<span style="letter-spacing:-1.4px">1</span></div>
<div class="t" style="right:324.60px;top:713.42px;font-size:9.9px;font-weight:700;color:#404040;transform:scaleX(0.8000);transform-origin:100% 0;">6 080,6</div>
<div class="t" style="right:258.60px;top:713.42px;font-size:9.9px;font-weight:700;color:#404040;transform:scaleX(0.8000);transform-origin:100% 0;">7 5<span style="letter-spacing:-1.4px">1</span><span style="letter-spacing:-1.4px">1</span>,7</div>
<div class="t" style="right:192.50px;top:713.42px;font-size:9.9px;font-weight:700;color:#404040;transform:scaleX(0.8000);transform-origin:100% 0;">6 394,7</div>
<div class="t" style="right:136.70px;top:713.42px;font-size:9.9px;font-weight:700;color:#404040;transform:scaleX(0.8800);transform-origin:100% 0;"><span style="letter-spacing:-1.0px">1</span>00%</div>
<div class="t" style="left:900.80px;top:246.53px;font-size:10px;font-weight:400;color:#3a3a3a;transform:scaleX(0.8316);transform-origin:0 0;font-weight:500;-webkit-text-stroke:.15px #3a3a3a">Munkakör besorolási szintje</div>
<div class="b" style="left:901.00px;top:259.10px;width:24.60px;height:11.40px;background:#0b4a6d"></div>
<div class="t" style="left:763.30px;width:300px;text-align:center;top:260.62px;font-size:8.6px;font-weight:400;color:#fff;transform:scaleX(0.8000);transform-origin:50% 0;">SC</div>
<div class="b" style="left:926.90px;top:259.10px;width:23.10px;height:11.40px;background:#0b4a6d"></div>
<div class="t" style="left:788.45px;width:300px;text-align:center;top:260.62px;font-size:8.6px;font-weight:400;color:#fff;transform:scaleX(0.8000);transform-origin:50% 0;">Hay</div>
<div class="b" style="left:951.90px;top:259.10px;width:23.40px;height:11.40px;background:#0b4a6d"></div>
<div class="t" style="left:813.60px;width:300px;text-align:center;top:260.62px;font-size:8.6px;font-weight:400;color:#fff;transform:scaleX(0.6800);transform-origin:50% 0;">Mercer</div>
<div class="b" style="left:976.00px;top:259.10px;width:24.80px;height:11.40px;background:#0b4a6d"></div>
<div class="t" style="left:838.40px;width:300px;text-align:center;top:260.62px;font-size:8.6px;font-weight:400;color:#fff;transform:scaleX(0.8000);transform-origin:50% 0;">TW</div>
<div class="b" style="left:901.00px;top:270.60px;width:24.60px;height:496.90px;background:#dcf3ec"></div>
<div class="b" style="left:901.00px;top:303.50px;width:24.60px;height:1.00px;background:#d9d9d9"></div>
<div class="b" style="left:901.00px;top:336.75px;width:24.60px;height:1.00px;background:#d9d9d9"></div>
<div class="b" style="left:901.00px;top:369.90px;width:24.60px;height:1.00px;background:#d9d9d9"></div>
<div class="b" style="left:901.00px;top:403.00px;width:24.60px;height:1.00px;background:#d9d9d9"></div>
<div class="b" style="left:901.00px;top:436.00px;width:24.60px;height:1.00px;background:#d9d9d9"></div>
<div class="b" style="left:901.00px;top:468.90px;width:24.60px;height:1.00px;background:#d9d9d9"></div>
<div class="b" style="left:901.00px;top:502.00px;width:24.60px;height:1.00px;background:#d9d9d9"></div>
<div class="b" style="left:901.00px;top:535.50px;width:24.60px;height:1.00px;background:#d9d9d9"></div>
<div class="b" style="left:901.00px;top:568.25px;width:24.60px;height:1.00px;background:#d9d9d9"></div>
<div class="b" style="left:901.00px;top:600.75px;width:24.60px;height:1.00px;background:#d9d9d9"></div>
<div class="b" style="left:901.00px;top:634.25px;width:24.60px;height:1.00px;background:#d9d9d9"></div>
<div class="b" style="left:901.00px;top:667.40px;width:24.60px;height:1.00px;background:#d9d9d9"></div>
<div class="b" style="left:901.00px;top:700.10px;width:24.60px;height:1.00px;background:#d9d9d9"></div>
<div class="b" style="left:901.00px;top:733.90px;width:24.60px;height:1.00px;background:#d9d9d9"></div>
<div class="t" style="left:763.30px;width:300px;text-align:center;top:281.69px;font-size:9.4px;font-weight:400;color:#333;transform:scaleX(0.8000);transform-origin:50% 0;-webkit-text-stroke:.2px #333"><span style="letter-spacing:-1.3px">1</span>5</div>
<div class="t" style="left:763.30px;width:300px;text-align:center;top:315.01px;font-size:9.4px;font-weight:400;color:#333;transform:scaleX(0.8000);transform-origin:50% 0;-webkit-text-stroke:.2px #333"><span style="letter-spacing:-1.3px">1</span>4</div>
<div class="t" style="left:763.30px;width:300px;text-align:center;top:348.21px;font-size:9.4px;font-weight:400;color:#333;transform:scaleX(0.8000);transform-origin:50% 0;-webkit-text-stroke:.2px #333"><span style="letter-spacing:-1.3px">1</span>3</div>
<div class="t" style="left:763.30px;width:300px;text-align:center;top:381.34px;font-size:9.4px;font-weight:400;color:#333;transform:scaleX(0.8000);transform-origin:50% 0;-webkit-text-stroke:.2px #333"><span style="letter-spacing:-1.3px">1</span>2</div>
<div class="t" style="left:762.90px;width:300px;text-align:center;top:414.39px;font-size:9.4px;font-weight:400;color:#333;transform:scaleX(0.8000);transform-origin:50% 0;-webkit-text-stroke:.2px #333"><span style="letter-spacing:-1.3px">1</span><span style="letter-spacing:-1.3px">1</span></div>
<div class="t" style="left:763.30px;width:300px;text-align:center;top:447.34px;font-size:9.4px;font-weight:400;color:#333;transform:scaleX(0.8000);transform-origin:50% 0;-webkit-text-stroke:.2px #333"><span style="letter-spacing:-1.3px">1</span>0</div>
<div class="t" style="left:763.30px;width:300px;text-align:center;top:480.34px;font-size:9.4px;font-weight:400;color:#333;transform:scaleX(0.8000);transform-origin:50% 0;-webkit-text-stroke:.2px #333">9</div>
<div class="t" style="left:763.30px;width:300px;text-align:center;top:513.64px;font-size:9.4px;font-weight:400;color:#333;transform:scaleX(0.8000);transform-origin:50% 0;-webkit-text-stroke:.2px #333">8</div>
<div class="t" style="left:763.30px;width:300px;text-align:center;top:546.76px;font-size:9.4px;font-weight:400;color:#333;transform:scaleX(0.8000);transform-origin:50% 0;-webkit-text-stroke:.2px #333">7</div>
<div class="t" style="left:763.30px;width:300px;text-align:center;top:579.39px;font-size:9.4px;font-weight:400;color:#333;transform:scaleX(0.8000);transform-origin:50% 0;-webkit-text-stroke:.2px #333">6</div>
<div class="t" style="left:763.30px;width:300px;text-align:center;top:612.39px;font-size:9.4px;font-weight:400;color:#333;transform:scaleX(0.8000);transform-origin:50% 0;-webkit-text-stroke:.2px #333">5</div>
<div class="t" style="left:763.30px;width:300px;text-align:center;top:645.71px;font-size:9.4px;font-weight:400;color:#333;transform:scaleX(0.8000);transform-origin:50% 0;-webkit-text-stroke:.2px #333">4</div>
<div class="t" style="left:763.30px;width:300px;text-align:center;top:678.64px;font-size:9.4px;font-weight:400;color:#333;transform:scaleX(0.8000);transform-origin:50% 0;-webkit-text-stroke:.2px #333">3</div>
<div class="t" style="left:763.30px;width:300px;text-align:center;top:711.89px;font-size:9.4px;font-weight:400;color:#333;transform:scaleX(0.8000);transform-origin:50% 0;-webkit-text-stroke:.2px #333">2</div>
<div class="t" style="left:762.90px;width:300px;text-align:center;top:745.34px;font-size:9.4px;font-weight:400;color:#333;transform:scaleX(0.8000);transform-origin:50% 0;-webkit-text-stroke:.2px #333"><span style="letter-spacing:-1.3px">1</span></div>
<div class="b" style="left:926.30px;top:270.60px;width:24.20px;height:496.90px;background:#fff"></div>
<div class="b" style="left:926.30px;top:276.60px;width:24.20px;height:1.00px;background:#d9d9d9"></div>
<div class="b" style="left:926.30px;top:297.25px;width:24.20px;height:1.00px;background:#d9d9d9"></div>
<div class="b" style="left:926.30px;top:316.75px;width:24.20px;height:1.00px;background:#d9d9d9"></div>
<div class="b" style="left:926.30px;top:339.75px;width:24.20px;height:1.00px;background:#d9d9d9"></div>
<div class="b" style="left:926.30px;top:359.75px;width:24.20px;height:1.00px;background:#d9d9d9"></div>
<div class="b" style="left:926.30px;top:383.00px;width:24.20px;height:1.00px;background:#d9d9d9"></div>
<div class="b" style="left:926.30px;top:406.00px;width:24.20px;height:1.00px;background:#d9d9d9"></div>
<div class="b" style="left:926.30px;top:426.40px;width:24.20px;height:1.00px;background:#d9d9d9"></div>
<div class="b" style="left:926.30px;top:448.90px;width:24.20px;height:1.00px;background:#d9d9d9"></div>
<div class="b" style="left:926.30px;top:472.60px;width:24.20px;height:1.00px;background:#d9d9d9"></div>
<div class="b" style="left:926.30px;top:492.40px;width:24.20px;height:1.00px;background:#d9d9d9"></div>
<div class="b" style="left:926.30px;top:515.10px;width:24.20px;height:1.00px;background:#d9d9d9"></div>
<div class="b" style="left:926.30px;top:537.60px;width:24.20px;height:1.00px;background:#d9d9d9"></div>
<div class="b" style="left:926.30px;top:560.75px;width:24.20px;height:1.00px;background:#d9d9d9"></div>
<div class="b" style="left:926.30px;top:587.60px;width:24.20px;height:1.00px;background:#d9d9d9"></div>
<div class="b" style="left:926.30px;top:624.50px;width:24.20px;height:1.00px;background:#d9d9d9"></div>
<div class="b" style="left:926.30px;top:654.10px;width:24.20px;height:1.00px;background:#d9d9d9"></div>
<div class="b" style="left:926.30px;top:677.40px;width:24.20px;height:1.00px;background:#d9d9d9"></div>
<div class="b" style="left:926.30px;top:697.00px;width:24.20px;height:1.00px;background:#d9d9d9"></div>
<div class="b" style="left:926.30px;top:713.90px;width:24.20px;height:1.00px;background:#d9d9d9"></div>
<div class="b" style="left:926.30px;top:733.90px;width:24.20px;height:1.00px;background:#d9d9d9"></div>
<div class="b" style="left:926.30px;top:753.90px;width:24.20px;height:1.00px;background:#d9d9d9"></div>
<div class="t" style="left:788.40px;width:300px;text-align:center;top:281.81px;font-size:9.4px;font-weight:400;color:#333;transform:scaleX(0.8000);transform-origin:50% 0;-webkit-text-stroke:.2px #333">25</div>
<div class="t" style="left:788.40px;width:300px;text-align:center;top:301.89px;font-size:9.4px;font-weight:400;color:#333;transform:scaleX(0.8000);transform-origin:50% 0;-webkit-text-stroke:.2px #333">24</div>
<div class="t" style="left:788.40px;width:300px;text-align:center;top:323.14px;font-size:9.4px;font-weight:400;color:#333;transform:scaleX(0.8000);transform-origin:50% 0;-webkit-text-stroke:.2px #333">23</div>
<div class="t" style="left:788.40px;width:300px;text-align:center;top:344.64px;font-size:9.4px;font-weight:400;color:#333;transform:scaleX(0.8000);transform-origin:50% 0;-webkit-text-stroke:.2px #333">22</div>
<div class="t" style="left:788.00px;width:300px;text-align:center;top:366.26px;font-size:9.4px;font-weight:400;color:#333;transform:scaleX(0.8000);transform-origin:50% 0;-webkit-text-stroke:.2px #333">2<span style="letter-spacing:-1.3px">1</span></div>
<div class="t" style="left:788.40px;width:300px;text-align:center;top:389.39px;font-size:9.4px;font-weight:400;color:#333;transform:scaleX(0.8000);transform-origin:50% 0;-webkit-text-stroke:.2px #333">20</div>
<div class="t" style="left:788.40px;width:300px;text-align:center;top:411.09px;font-size:9.4px;font-weight:400;color:#333;transform:scaleX(0.8000);transform-origin:50% 0;-webkit-text-stroke:.2px #333"><span style="letter-spacing:-1.3px">1</span>9</div>
<div class="t" style="left:788.40px;width:300px;text-align:center;top:432.54px;font-size:9.4px;font-weight:400;color:#333;transform:scaleX(0.8000);transform-origin:50% 0;-webkit-text-stroke:.2px #333"><span style="letter-spacing:-1.3px">1</span>8</div>
<div class="t" style="left:788.40px;width:300px;text-align:center;top:455.64px;font-size:9.4px;font-weight:400;color:#333;transform:scaleX(0.8000);transform-origin:50% 0;-webkit-text-stroke:.2px #333"><span style="letter-spacing:-1.3px">1</span>7</div>
<div class="t" style="left:788.40px;width:300px;text-align:center;top:477.39px;font-size:9.4px;font-weight:400;color:#333;transform:scaleX(0.8000);transform-origin:50% 0;-webkit-text-stroke:.2px #333"><span style="letter-spacing:-1.3px">1</span>6</div>
<div class="t" style="left:788.40px;width:300px;text-align:center;top:498.64px;font-size:9.4px;font-weight:400;color:#333;transform:scaleX(0.8000);transform-origin:50% 0;-webkit-text-stroke:.2px #333"><span style="letter-spacing:-1.3px">1</span>5</div>
<div class="t" style="left:788.40px;width:300px;text-align:center;top:521.24px;font-size:9.4px;font-weight:400;color:#333;transform:scaleX(0.8000);transform-origin:50% 0;-webkit-text-stroke:.2px #333"><span style="letter-spacing:-1.3px">1</span>4</div>
<div class="t" style="left:788.40px;width:300px;text-align:center;top:544.06px;font-size:9.4px;font-weight:400;color:#333;transform:scaleX(0.8000);transform-origin:50% 0;-webkit-text-stroke:.2px #333"><span style="letter-spacing:-1.3px">1</span>3</div>
<div class="t" style="left:788.40px;width:300px;text-align:center;top:569.06px;font-size:9.4px;font-weight:400;color:#333;transform:scaleX(0.8000);transform-origin:50% 0;-webkit-text-stroke:.2px #333"><span style="letter-spacing:-1.3px">1</span>2</div>
<div class="t" style="left:788.00px;width:300px;text-align:center;top:600.94px;font-size:9.4px;font-weight:400;color:#333;transform:scaleX(0.8000);transform-origin:50% 0;-webkit-text-stroke:.2px #333"><span style="letter-spacing:-1.3px">1</span><span style="letter-spacing:-1.3px">1</span></div>
<div class="t" style="left:788.40px;width:300px;text-align:center;top:634.19px;font-size:9.4px;font-weight:400;color:#333;transform:scaleX(0.8000);transform-origin:50% 0;-webkit-text-stroke:.2px #333"><span style="letter-spacing:-1.3px">1</span>0</div>
<div class="t" style="left:788.40px;width:300px;text-align:center;top:660.64px;font-size:9.4px;font-weight:400;color:#333;transform:scaleX(0.8000);transform-origin:50% 0;-webkit-text-stroke:.2px #333">9</div>
<div class="t" style="left:788.40px;width:300px;text-align:center;top:682.09px;font-size:9.4px;font-weight:400;color:#333;transform:scaleX(0.8000);transform-origin:50% 0;-webkit-text-stroke:.2px #333">8</div>
<div class="t" style="left:788.40px;width:300px;text-align:center;top:700.34px;font-size:9.4px;font-weight:400;color:#333;transform:scaleX(0.8000);transform-origin:50% 0;-webkit-text-stroke:.2px #333">7</div>
<div class="t" style="left:788.40px;width:300px;text-align:center;top:718.79px;font-size:9.4px;font-weight:400;color:#333;transform:scaleX(0.8000);transform-origin:50% 0;-webkit-text-stroke:.2px #333">6</div>
<div class="t" style="left:788.40px;width:300px;text-align:center;top:738.79px;font-size:9.4px;font-weight:400;color:#333;transform:scaleX(0.8000);transform-origin:50% 0;-webkit-text-stroke:.2px #333">5</div>
<div class="t" style="left:788.40px;width:300px;text-align:center;top:755.34px;font-size:9.4px;font-weight:400;color:#333;transform:scaleX(0.8000);transform-origin:50% 0;-webkit-text-stroke:.2px #333">4</div>
<div class="b" style="left:951.90px;top:270.60px;width:23.60px;height:496.90px;background:#fff"></div>
<div class="b" style="left:951.90px;top:283.90px;width:23.60px;height:1.00px;background:#d9d9d9"></div>
<div class="b" style="left:951.90px;top:297.00px;width:23.60px;height:1.00px;background:#d9d9d9"></div>
<div class="b" style="left:951.90px;top:309.75px;width:23.60px;height:1.00px;background:#d9d9d9"></div>
<div class="b" style="left:951.90px;top:323.50px;width:23.60px;height:1.00px;background:#d9d9d9"></div>
<div class="b" style="left:951.90px;top:336.75px;width:23.60px;height:1.00px;background:#d9d9d9"></div>
<div class="b" style="left:951.90px;top:349.90px;width:23.60px;height:1.00px;background:#d9d9d9"></div>
<div class="b" style="left:951.90px;top:360.40px;width:23.60px;height:1.00px;background:#d9d9d9"></div>
<div class="b" style="left:951.90px;top:373.25px;width:23.60px;height:1.00px;background:#d9d9d9"></div>
<div class="b" style="left:951.90px;top:386.00px;width:23.60px;height:1.00px;background:#d9d9d9"></div>
<div class="b" style="left:951.90px;top:399.10px;width:23.60px;height:1.00px;background:#d9d9d9"></div>
<div class="b" style="left:951.90px;top:412.60px;width:23.60px;height:1.00px;background:#d9d9d9"></div>
<div class="b" style="left:951.90px;top:426.00px;width:23.60px;height:1.00px;background:#d9d9d9"></div>
<div class="b" style="left:951.90px;top:439.50px;width:23.60px;height:1.00px;background:#d9d9d9"></div>
<div class="b" style="left:951.90px;top:456.00px;width:23.60px;height:1.00px;background:#d9d9d9"></div>
<div class="b" style="left:951.90px;top:468.90px;width:23.60px;height:1.00px;background:#d9d9d9"></div>
<div class="b" style="left:951.90px;top:485.50px;width:23.60px;height:1.00px;background:#d9d9d9"></div>
<div class="b" style="left:951.90px;top:498.90px;width:23.60px;height:1.00px;background:#d9d9d9"></div>
<div class="b" style="left:951.90px;top:515.10px;width:23.60px;height:1.00px;background:#d9d9d9"></div>
<div class="b" style="left:951.90px;top:527.60px;width:23.60px;height:1.00px;background:#d9d9d9"></div>
<div class="b" style="left:951.90px;top:547.60px;width:23.60px;height:1.00px;background:#d9d9d9"></div>
<div class="b" style="left:951.90px;top:568.25px;width:23.60px;height:1.00px;background:#d9d9d9"></div>
<div class="b" style="left:951.90px;top:587.60px;width:23.60px;height:1.00px;background:#d9d9d9"></div>
<div class="b" style="left:951.90px;top:613.90px;width:23.60px;height:1.00px;background:#d9d9d9"></div>
<div class="b" style="left:951.90px;top:638.00px;width:23.60px;height:1.00px;background:#d9d9d9"></div>
<div class="b" style="left:951.90px;top:660.75px;width:23.60px;height:1.00px;background:#d9d9d9"></div>
<div class="b" style="left:951.90px;top:687.60px;width:23.60px;height:1.00px;background:#d9d9d9"></div>
<div class="b" style="left:951.90px;top:713.90px;width:23.60px;height:1.00px;background:#d9d9d9"></div>
<div class="b" style="left:951.90px;top:747.00px;width:23.60px;height:1.00px;background:#d9d9d9"></div>
<div class="b" style="left:960.80px;top:277.50px;width:5.50px;height:1.50px;background:#4a4a4a"></div>
<div class="t" style="left:813.70px;width:300px;text-align:center;top:285.34px;font-size:9.4px;font-weight:400;color:#333;transform:scaleX(0.8000);transform-origin:50% 0;-webkit-text-stroke:.2px #333">67</div>
<div class="t" style="left:813.70px;width:300px;text-align:center;top:298.26px;font-size:9.4px;font-weight:400;color:#333;transform:scaleX(0.8000);transform-origin:50% 0;-webkit-text-stroke:.2px #333">66</div>
<div class="t" style="left:813.70px;width:300px;text-align:center;top:311.51px;font-size:9.4px;font-weight:400;color:#333;transform:scaleX(0.8000);transform-origin:50% 0;-webkit-text-stroke:.2px #333">65</div>
<div class="t" style="left:813.70px;width:300px;text-align:center;top:325.01px;font-size:9.4px;font-weight:400;color:#333;transform:scaleX(0.8000);transform-origin:50% 0;-webkit-text-stroke:.2px #333">64</div>
<div class="t" style="left:813.70px;width:300px;text-align:center;top:338.21px;font-size:9.4px;font-weight:400;color:#333;transform:scaleX(0.8000);transform-origin:50% 0;-webkit-text-stroke:.2px #333">63</div>
<div class="t" style="left:813.70px;width:300px;text-align:center;top:350.04px;font-size:9.4px;font-weight:400;color:#333;transform:scaleX(0.8000);transform-origin:50% 0;-webkit-text-stroke:.2px #333">62</div>
<div class="t" style="left:813.30px;width:300px;text-align:center;top:361.71px;font-size:9.4px;font-weight:400;color:#333;transform:scaleX(0.8000);transform-origin:50% 0;-webkit-text-stroke:.2px #333">6<span style="letter-spacing:-1.3px">1</span></div>
<div class="t" style="left:813.70px;width:300px;text-align:center;top:374.51px;font-size:9.4px;font-weight:400;color:#333;transform:scaleX(0.8000);transform-origin:50% 0;-webkit-text-stroke:.2px #333">60</div>
<div class="t" style="left:813.70px;width:300px;text-align:center;top:387.44px;font-size:9.4px;font-weight:400;color:#333;transform:scaleX(0.8000);transform-origin:50% 0;-webkit-text-stroke:.2px #333">59</div>
<div class="t" style="left:813.70px;width:300px;text-align:center;top:400.74px;font-size:9.4px;font-weight:400;color:#333;transform:scaleX(0.8000);transform-origin:50% 0;-webkit-text-stroke:.2px #333">58</div>
<div class="t" style="left:813.70px;width:300px;text-align:center;top:414.19px;font-size:9.4px;font-weight:400;color:#333;transform:scaleX(0.8000);transform-origin:50% 0;-webkit-text-stroke:.2px #333">57</div>
<div class="t" style="left:813.70px;width:300px;text-align:center;top:427.64px;font-size:9.4px;font-weight:400;color:#333;transform:scaleX(0.8000);transform-origin:50% 0;-webkit-text-stroke:.2px #333">56</div>
<div class="t" style="left:813.70px;width:300px;text-align:center;top:442.64px;font-size:9.4px;font-weight:400;color:#333;transform:scaleX(0.8000);transform-origin:50% 0;-webkit-text-stroke:.2px #333">55</div>
<div class="t" style="left:813.70px;width:300px;text-align:center;top:457.34px;font-size:9.4px;font-weight:400;color:#333;transform:scaleX(0.8000);transform-origin:50% 0;-webkit-text-stroke:.2px #333">54</div>
<div class="t" style="left:813.70px;width:300px;text-align:center;top:472.09px;font-size:9.4px;font-weight:400;color:#333;transform:scaleX(0.8000);transform-origin:50% 0;-webkit-text-stroke:.2px #333">53</div>
<div class="t" style="left:813.70px;width:300px;text-align:center;top:487.09px;font-size:9.4px;font-weight:400;color:#333;transform:scaleX(0.8000);transform-origin:50% 0;-webkit-text-stroke:.2px #333">52</div>
<div class="t" style="left:813.30px;width:300px;text-align:center;top:501.89px;font-size:9.4px;font-weight:400;color:#333;transform:scaleX(0.8000);transform-origin:50% 0;-webkit-text-stroke:.2px #333">5<span style="letter-spacing:-1.3px">1</span></div>
<div class="t" style="left:813.70px;width:300px;text-align:center;top:516.24px;font-size:9.4px;font-weight:400;color:#333;transform:scaleX(0.8000);transform-origin:50% 0;-webkit-text-stroke:.2px #333">50</div>
<div class="t" style="left:813.70px;width:300px;text-align:center;top:532.49px;font-size:9.4px;font-weight:400;color:#333;transform:scaleX(0.8000);transform-origin:50% 0;-webkit-text-stroke:.2px #333">49</div>
<div class="t" style="left:813.70px;width:300px;text-align:center;top:552.81px;font-size:9.4px;font-weight:400;color:#333;transform:scaleX(0.8000);transform-origin:50% 0;-webkit-text-stroke:.2px #333">48</div>
<div class="t" style="left:813.70px;width:300px;text-align:center;top:572.81px;font-size:9.4px;font-weight:400;color:#333;transform:scaleX(0.8000);transform-origin:50% 0;-webkit-text-stroke:.2px #333">47</div>
<div class="t" style="left:813.70px;width:300px;text-align:center;top:595.64px;font-size:9.4px;font-weight:400;color:#333;transform:scaleX(0.8000);transform-origin:50% 0;-webkit-text-stroke:.2px #333">46</div>
<div class="t" style="left:813.70px;width:300px;text-align:center;top:620.84px;font-size:9.4px;font-weight:400;color:#333;transform:scaleX(0.8000);transform-origin:50% 0;-webkit-text-stroke:.2px #333">45</div>
<div class="t" style="left:813.70px;width:300px;text-align:center;top:644.26px;font-size:9.4px;font-weight:400;color:#333;transform:scaleX(0.8000);transform-origin:50% 0;-webkit-text-stroke:.2px #333">44</div>
<div class="t" style="left:813.70px;width:300px;text-align:center;top:669.06px;font-size:9.4px;font-weight:400;color:#333;transform:scaleX(0.8000);transform-origin:50% 0;-webkit-text-stroke:.2px #333">43</div>
<div class="t" style="left:813.70px;width:300px;text-align:center;top:695.64px;font-size:9.4px;font-weight:400;color:#333;transform:scaleX(0.8000);transform-origin:50% 0;-webkit-text-stroke:.2px #333">42</div>
<div class="t" style="left:813.30px;width:300px;text-align:center;top:725.34px;font-size:9.4px;font-weight:400;color:#333;transform:scaleX(0.8000);transform-origin:50% 0;-webkit-text-stroke:.2px #333">4<span style="letter-spacing:-1.3px">1</span></div>
<div class="t" style="left:813.70px;width:300px;text-align:center;top:751.89px;font-size:9.4px;font-weight:400;color:#333;transform:scaleX(0.8000);transform-origin:50% 0;-webkit-text-stroke:.2px #333">40</div>
<div class="b" style="left:975.50px;top:270.60px;width:25.00px;height:496.90px;background:#fff"></div>
<div class="b" style="left:975.50px;top:297.25px;width:25.00px;height:1.00px;background:#d9d9d9"></div>
<div class="b" style="left:975.50px;top:323.50px;width:25.00px;height:1.00px;background:#d9d9d9"></div>
<div class="b" style="left:975.50px;top:346.00px;width:25.00px;height:1.00px;background:#d9d9d9"></div>
<div class="b" style="left:975.50px;top:363.00px;width:25.00px;height:1.00px;background:#d9d9d9"></div>
<div class="b" style="left:975.50px;top:383.00px;width:25.00px;height:1.00px;background:#d9d9d9"></div>
<div class="b" style="left:975.50px;top:406.00px;width:25.00px;height:1.00px;background:#d9d9d9"></div>
<div class="b" style="left:975.50px;top:429.25px;width:25.00px;height:1.00px;background:#d9d9d9"></div>
<div class="b" style="left:975.50px;top:456.00px;width:25.00px;height:1.00px;background:#d9d9d9"></div>
<div class="b" style="left:975.50px;top:482.00px;width:25.00px;height:1.00px;background:#d9d9d9"></div>
<div class="b" style="left:975.50px;top:508.50px;width:25.00px;height:1.00px;background:#d9d9d9"></div>
<div class="b" style="left:975.50px;top:537.60px;width:25.00px;height:1.00px;background:#d9d9d9"></div>
<div class="b" style="left:975.50px;top:560.75px;width:25.00px;height:1.00px;background:#d9d9d9"></div>
<div class="b" style="left:975.50px;top:584.75px;width:25.00px;height:1.00px;background:#d9d9d9"></div>
<div class="b" style="left:975.50px;top:613.90px;width:25.00px;height:1.00px;background:#d9d9d9"></div>
<div class="b" style="left:975.50px;top:638.00px;width:25.00px;height:1.00px;background:#d9d9d9"></div>
<div class="b" style="left:975.50px;top:663.90px;width:25.00px;height:1.00px;background:#d9d9d9"></div>
<div class="b" style="left:975.50px;top:691.00px;width:25.00px;height:1.00px;background:#d9d9d9"></div>
<div class="b" style="left:975.50px;top:711.00px;width:25.00px;height:1.00px;background:#d9d9d9"></div>
<div class="b" style="left:975.50px;top:743.90px;width:25.00px;height:1.00px;background:#d9d9d9"></div>
<div class="b" style="left:985.10px;top:277.50px;width:5.50px;height:1.50px;background:#4a4a4a"></div>
<div class="t" style="left:838.00px;width:300px;text-align:center;top:305.26px;font-size:9.4px;font-weight:400;color:#333;transform:scaleX(0.8000);transform-origin:50% 0;-webkit-text-stroke:.2px #333">20</div>
<div class="t" style="left:838.00px;width:300px;text-align:center;top:329.64px;font-size:9.4px;font-weight:400;color:#333;transform:scaleX(0.8000);transform-origin:50% 0;-webkit-text-stroke:.2px #333"><span style="letter-spacing:-1.3px">1</span>9</div>
<div class="t" style="left:838.00px;width:300px;text-align:center;top:349.39px;font-size:9.4px;font-weight:400;color:#333;transform:scaleX(0.8000);transform-origin:50% 0;-webkit-text-stroke:.2px #333"><span style="letter-spacing:-1.3px">1</span>8</div>
<div class="t" style="left:838.00px;width:300px;text-align:center;top:367.89px;font-size:9.4px;font-weight:400;color:#333;transform:scaleX(0.8000);transform-origin:50% 0;-webkit-text-stroke:.2px #333"><span style="letter-spacing:-1.3px">1</span>7</div>
<div class="t" style="left:838.00px;width:300px;text-align:center;top:389.39px;font-size:9.4px;font-weight:400;color:#333;transform:scaleX(0.8000);transform-origin:50% 0;-webkit-text-stroke:.2px #333"><span style="letter-spacing:-1.3px">1</span>6</div>
<div class="t" style="left:838.00px;width:300px;text-align:center;top:412.51px;font-size:9.4px;font-weight:400;color:#333;transform:scaleX(0.8000);transform-origin:50% 0;-webkit-text-stroke:.2px #333"><span style="letter-spacing:-1.3px">1</span>5</div>
<div class="t" style="left:838.00px;width:300px;text-align:center;top:437.51px;font-size:9.4px;font-weight:400;color:#333;transform:scaleX(0.8000);transform-origin:50% 0;-webkit-text-stroke:.2px #333"><span style="letter-spacing:-1.3px">1</span>4</div>
<div class="t" style="left:838.00px;width:300px;text-align:center;top:463.89px;font-size:9.4px;font-weight:400;color:#333;transform:scaleX(0.8000);transform-origin:50% 0;-webkit-text-stroke:.2px #333"><span style="letter-spacing:-1.3px">1</span>3</div>
<div class="t" style="left:838.00px;width:300px;text-align:center;top:490.14px;font-size:9.4px;font-weight:400;color:#333;transform:scaleX(0.8000);transform-origin:50% 0;-webkit-text-stroke:.2px #333"><span style="letter-spacing:-1.3px">1</span>2</div>
<div class="t" style="left:837.60px;width:300px;text-align:center;top:517.94px;font-size:9.4px;font-weight:400;color:#333;transform:scaleX(0.8000);transform-origin:50% 0;-webkit-text-stroke:.2px #333"><span style="letter-spacing:-1.3px">1</span><span style="letter-spacing:-1.3px">1</span></div>
<div class="t" style="left:838.00px;width:300px;text-align:center;top:544.06px;font-size:9.4px;font-weight:400;color:#333;transform:scaleX(0.8000);transform-origin:50% 0;-webkit-text-stroke:.2px #333"><span style="letter-spacing:-1.3px">1</span>0</div>
<div class="t" style="left:838.00px;width:300px;text-align:center;top:567.64px;font-size:9.4px;font-weight:400;color:#333;transform:scaleX(0.8000);transform-origin:50% 0;-webkit-text-stroke:.2px #333">9</div>
<div class="t" style="left:838.00px;width:300px;text-align:center;top:594.21px;font-size:9.4px;font-weight:400;color:#333;transform:scaleX(0.8000);transform-origin:50% 0;-webkit-text-stroke:.2px #333">8</div>
<div class="t" style="left:838.00px;width:300px;text-align:center;top:620.84px;font-size:9.4px;font-weight:400;color:#333;transform:scaleX(0.8000);transform-origin:50% 0;-webkit-text-stroke:.2px #333">7</div>
<div class="t" style="left:838.00px;width:300px;text-align:center;top:645.84px;font-size:9.4px;font-weight:400;color:#333;transform:scaleX(0.8000);transform-origin:50% 0;-webkit-text-stroke:.2px #333">6</div>
<div class="t" style="left:838.00px;width:300px;text-align:center;top:672.34px;font-size:9.4px;font-weight:400;color:#333;transform:scaleX(0.8000);transform-origin:50% 0;-webkit-text-stroke:.2px #333">5</div>
<div class="t" style="left:838.00px;width:300px;text-align:center;top:695.89px;font-size:9.4px;font-weight:400;color:#333;transform:scaleX(0.8000);transform-origin:50% 0;-webkit-text-stroke:.2px #333">4</div>
<div class="t" style="left:838.00px;width:300px;text-align:center;top:722.34px;font-size:9.4px;font-weight:400;color:#333;transform:scaleX(0.8000);transform-origin:50% 0;-webkit-text-stroke:.2px #333">3</div>
<div class="t" style="left:838.00px;width:300px;text-align:center;top:750.34px;font-size:9.4px;font-weight:400;color:#333;transform:scaleX(0.8000);transform-origin:50% 0;-webkit-text-stroke:.2px #333">2</div>
<div class="b" style="left:900.50px;top:270.50px;width:0.80px;height:497.00px;background:#d9d9d9"></div>
<div class="b" style="left:925.60px;top:270.50px;width:1.00px;height:497.00px;background:#d9d9d9"></div>
<div class="b" style="left:950.30px;top:270.50px;width:1.80px;height:497.00px;background:#cfcfcf"></div>
<div class="b" style="left:975.20px;top:270.50px;width:1.00px;height:497.00px;background:#d9d9d9"></div>
<div class="b" style="left:1000.20px;top:270.50px;width:1.00px;height:497.50px;background:#d9d9d9"></div>
<div class="b" style="left:900.50px;top:767.00px;width:100.70px;height:1.00px;background:#d9d9d9"></div>
<div class="b" style="left:901.00px;top:536.00px;width:100.00px;height:32.75px;background:rgba(200,20,20,.24)"></div>
<div class="t" style="left:339.50px;top:796.93px;font-size:11.9px;font-weight:400;color:#5e5e5e;transform:scaleX(0.8000);transform-origin:0 0;">Munkakör vállalati összehasonlítás</div>
<div class="t" style="left:689.50px;top:796.93px;font-size:11.9px;font-weight:400;color:#5e5e5e;transform:scaleX(0.8000);transform-origin:0 0;">Munkaköri bérsávok alakulása</div>
<div class="b" style="left:0.00px;top:798.00px;width:1024.00px;height:1.00px;background:#6a6a6a"></div>
</body></html>
